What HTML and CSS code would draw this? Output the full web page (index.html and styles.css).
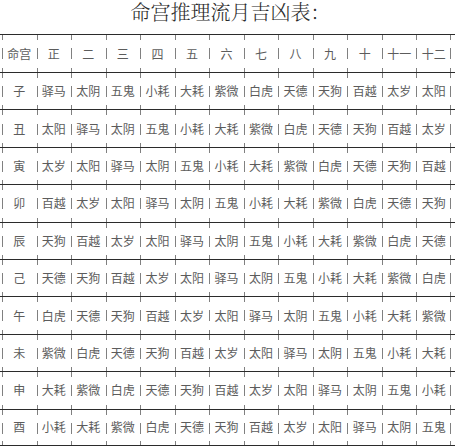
FILE: index.html
```html
<!DOCTYPE html>
<html lang="zh">
<head>
<meta charset="utf-8">
<link rel="stylesheet" href="styles.css">
</head>
<body>
<h1 class="title">命宫推理流月吉凶表：</h1>
<div class="table">
  <div class="row head"><div class="grid">
    <span class="c">命宫</span><span class="c">正</span><span class="c">二</span><span class="c">三</span><span class="c">四</span><span class="c">五</span><span class="c">六</span><span class="c">七</span><span class="c">八</span><span class="c">九</span><span class="c">十</span><span class="c">十一</span><span class="c last">十二</span>
  </div></div>
  <div class="row"><div class="grid">
    <span class="c">子</span><span class="c">驿马</span><span class="c">太阴</span><span class="c">五鬼</span><span class="c">小耗</span><span class="c">大耗</span><span class="c">紫微</span><span class="c">白虎</span><span class="c">天德</span><span class="c">天狗</span><span class="c">百越</span><span class="c">太岁</span><span class="c last">太阳</span>
  </div></div>
  <div class="row"><div class="grid">
    <span class="c">丑</span><span class="c">太阳</span><span class="c">驿马</span><span class="c">太阴</span><span class="c">五鬼</span><span class="c">小耗</span><span class="c">大耗</span><span class="c">紫微</span><span class="c">白虎</span><span class="c">天德</span><span class="c">天狗</span><span class="c">百越</span><span class="c last">太岁</span>
  </div></div>
  <div class="row"><div class="grid">
    <span class="c">寅</span><span class="c">太岁</span><span class="c">太阳</span><span class="c">驿马</span><span class="c">太阴</span><span class="c">五鬼</span><span class="c">小耗</span><span class="c">大耗</span><span class="c">紫微</span><span class="c">白虎</span><span class="c">天德</span><span class="c">天狗</span><span class="c last">百越</span>
  </div></div>
  <div class="row"><div class="grid">
    <span class="c">卯</span><span class="c">百越</span><span class="c">太岁</span><span class="c">太阳</span><span class="c">驿马</span><span class="c">太阴</span><span class="c">五鬼</span><span class="c">小耗</span><span class="c">大耗</span><span class="c">紫微</span><span class="c">白虎</span><span class="c">天德</span><span class="c last">天狗</span>
  </div></div>
  <div class="row"><div class="grid">
    <span class="c">辰</span><span class="c">天狗</span><span class="c">百越</span><span class="c">太岁</span><span class="c">太阳</span><span class="c">驿马</span><span class="c">太阴</span><span class="c">五鬼</span><span class="c">小耗</span><span class="c">大耗</span><span class="c">紫微</span><span class="c">白虎</span><span class="c last">天德</span>
  </div></div>
  <div class="row"><div class="grid">
    <span class="c">己</span><span class="c">天德</span><span class="c">天狗</span><span class="c">百越</span><span class="c">太岁</span><span class="c">太阳</span><span class="c">驿马</span><span class="c">太阴</span><span class="c">五鬼</span><span class="c">小耗</span><span class="c">大耗</span><span class="c">紫微</span><span class="c last">白虎</span>
  </div></div>
  <div class="row"><div class="grid">
    <span class="c">午</span><span class="c">白虎</span><span class="c">天德</span><span class="c">天狗</span><span class="c">百越</span><span class="c">太岁</span><span class="c">太阳</span><span class="c">驿马</span><span class="c">太阴</span><span class="c">五鬼</span><span class="c">小耗</span><span class="c">大耗</span><span class="c last">紫微</span>
  </div></div>
  <div class="row"><div class="grid">
    <span class="c">未</span><span class="c">紫微</span><span class="c">白虎</span><span class="c">天德</span><span class="c">天狗</span><span class="c">百越</span><span class="c">太岁</span><span class="c">太阳</span><span class="c">驿马</span><span class="c">太阴</span><span class="c">五鬼</span><span class="c">小耗</span><span class="c last">大耗</span>
  </div></div>
  <div class="row"><div class="grid">
    <span class="c">申</span><span class="c">大耗</span><span class="c">紫微</span><span class="c">白虎</span><span class="c">天德</span><span class="c">天狗</span><span class="c">百越</span><span class="c">太岁</span><span class="c">太阳</span><span class="c">驿马</span><span class="c">太阴</span><span class="c">五鬼</span><span class="c last">小耗</span>
  </div></div>
  <div class="row end"><div class="grid">
    <span class="c">酉</span><span class="c">小耗</span><span class="c">大耗</span><span class="c">紫微</span><span class="c">白虎</span><span class="c">天德</span><span class="c">天狗</span><span class="c">百越</span><span class="c">太岁</span><span class="c">太阳</span><span class="c">驿马</span><span class="c">太阴</span><span class="c last">五鬼</span>
  </div></div>
</div>
</body>
</html>
```

FILE: styles.css
```css
html, body {
  margin: 0;
  padding: 0;
  background: #fff;
}

.title {
  margin: 0;
  height: 34px;
  padding: 0 0 0 6px;
  font-family: "Noto Serif CJK SC", "Noto Sans CJK SC", serif;
  font-weight: 300;
  font-size: 20px;
  line-height: 24px;
  color: #2a2a2a;
  text-align: center;
  box-sizing: border-box;
}

.table {
  font-family: "Noto Sans CJK SC", sans-serif;
  font-size: 12px;
  color: #5c5c5c;
}

.row {
  box-sizing: border-box;
  height: 37.4px;
  border-top: 1px solid #2b2b2b;
}

.row.head {
  height: 38px;
}

.row.end {
  border-bottom: 1px solid #2b2b2b;
}

.grid {
  height: 100%;
  margin: 0 4px 0 2px;
  display: grid;
  grid-template-columns: repeat(13, 1fr);
}

.c {
  display: flex;
  align-items: center;
  justify-content: center;
  white-space: nowrap;
  padding-bottom: 1px;
  background-image: linear-gradient(to bottom,
    #808080 0 5px,
    transparent 5px calc(50% - 5px),
    #808080 calc(50% - 5px) calc(50% + 6px),
    transparent calc(50% + 6px) calc(100% - 4px),
    #808080 calc(100% - 4px) 100%);
  background-size: 1px 100%;
  background-repeat: no-repeat;
  background-position: left top;
}

.c.last {
  background-image:
    linear-gradient(to bottom,
      #808080 0 5px,
      transparent 5px calc(50% - 5px),
      #808080 calc(50% - 5px) calc(50% + 6px),
      transparent calc(50% + 6px) calc(100% - 4px),
      #808080 calc(100% - 4px) 100%),
    linear-gradient(to bottom,
      #808080 0 5px,
      transparent 5px calc(50% - 5px),
      #808080 calc(50% - 5px) calc(50% + 6px),
      transparent calc(50% + 6px) calc(100% - 4px),
      #808080 calc(100% - 4px) 100%);
  background-size: 1px 100%, 1px 100%;
  background-position: left top, right top;
}
```
